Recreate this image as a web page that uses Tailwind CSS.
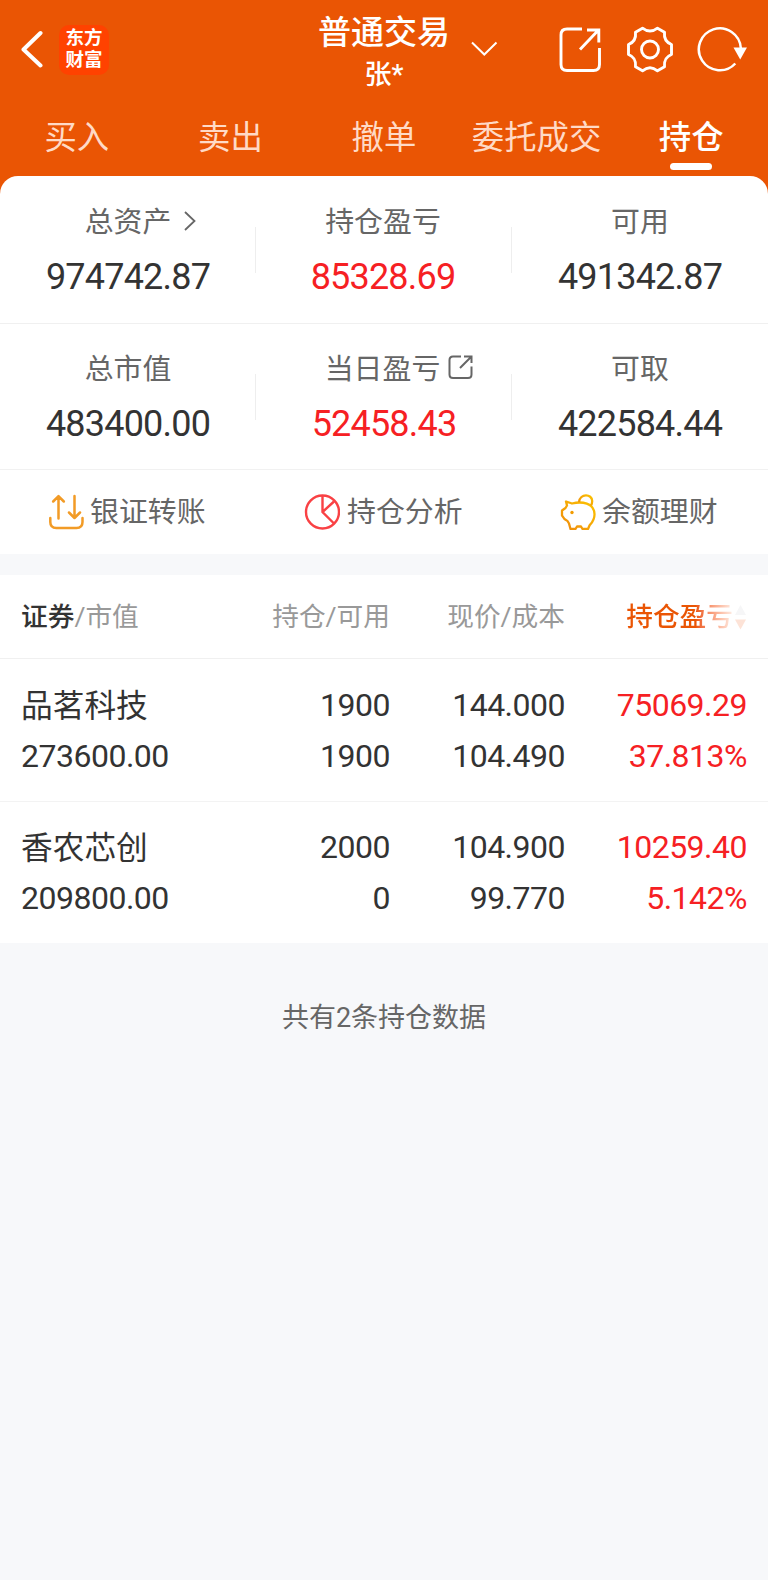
<!DOCTYPE html>
<html lang="zh-CN">
<head>
<meta charset="utf-8">
<title>普通交易</title>
<script src="https://cdn.jsdelivr.net/npm/@tailwindcss/browser@4"></script>
</head>
<body class="w-[768px] h-[1580px] overflow-hidden bg-[#f7f8fa] font-['Roboto','Noto_Sans_CJK_SC',sans-serif] text-[#333]">
<div class="bg-[#ea5504]">
  <header class="h-[100px] grid grid-cols-3">
    <div class="flex items-start">
      <svg class="w-[24px] h-[38px] ml-[20px] mt-[30px]" viewBox="0 0 24 38" fill="none" stroke="#fff" stroke-width="4" stroke-linecap="round" stroke-linejoin="round"><path d="M20.500 3L3.500 19.500L20.500 35.500"/></svg>
      <div class="ml-[15px] mt-[25px] size-[50px] rounded-[10px] bg-[#ff4200] text-white font-bold text-[18.500px] leading-[22px] text-center pt-[2px]">东方<br>财富</div>
    </div>
    <div class="relative flex flex-col items-center text-white">
      <h1 class="mt-[10px] h-[46px] leading-[46px] text-[33px] font-medium whitespace-nowrap">普通交易</h1>
      <div class="h-[36px] mt-[1px] leading-[36px] text-[27px] font-medium">张*</div>
      <svg class="absolute left-[215px] top-[41px] w-[27px] h-[16px]" viewBox="0 0 27 16" fill="none" stroke="#fff" stroke-width="2"><path d="M1 1.500L13.300 13.500L25.500 1.500"/></svg>
    </div>
    <div class="flex items-start text-white">
      <svg class="ml-[47px] mt-[27px] w-[42px] h-[46px]" viewBox="0 0 42 46" fill="none" stroke="currentColor" stroke-width="2.900"><path d="M23 2H8Q2 2 2 8V37.500Q2 43.500 8 43.500H34.500Q40.500 43.500 40.500 37.500V21M28 3H39.800V15.500M39.500 3L21 22.500" /></svg>
      <svg class="ml-[26px] mt-[26px] w-[46px] h-[47px]" viewBox="0 0 46 47" fill="none" stroke="currentColor" stroke-width="2.900" stroke-linejoin="round"><path d="M15.500 2.200Q23 8 30.500 2.200L37.500 6.200Q36.500 15.500 44.500 18.500V28.500Q36.500 31.500 37.500 40.800L30.500 44.800Q23 38.500 15.500 44.800L8.500 40.800Q9.500 31.500 1.500 28.500V18.500Q9.500 15.500 8.500 6.200Z"/><circle cx="23" cy="23.500" r="8.500"/></svg>
      <svg class="ml-[24px] mt-[26px] w-[50px] h-[47px]" viewBox="0 0 50 47" fill="none" stroke="currentColor" stroke-width="2.500"><path d="M43.800 22A21 21 0 1 0 38.300 37.500"/><path d="M36.500 21.500H50L43.200 33.500Z" fill="currentColor" stroke="none"/></svg>
    </div>
  </header>
  <nav class="h-[76px] grid grid-cols-5 text-center text-[32.400px] leading-[46px] text-[#ffdac6] pt-[15px] whitespace-nowrap">
    <div>买入</div><div>卖出</div><div>撤单</div><div class="-ml-[2px]">委托成交</div>
    <div class="text-white font-medium flex flex-col items-center">持仓<span class="mt-[2px] w-[42px] h-[7px] rounded-full bg-white"></span></div>
  </nav>
  <section class="bg-white rounded-t-[18px] text-center">
    <div class="h-[148px] border-b border-[#f0f0f0] grid grid-cols-3 relative">
      <div class="pt-[25px]">
        <div class="h-[42px] leading-[42px] text-[28.900px] text-[#666] relative">总资产
          <svg class="absolute left-[184px] top-[10px] w-[12px] h-[20px]" viewBox="0 0 12 20" fill="none" stroke="#666" stroke-width="1.800"><path d="M1 1L10.500 10L1 19"/></svg></div>
        <div class="h-[42px] mt-[13px] leading-[42px] text-[36px] tracking-[-0.800px]">974742.87</div>
      </div>
      <div class="pt-[25px]">
        <div class="h-[42px] leading-[42px] text-[28.900px] text-[#666] -ml-[2px]">持仓盈亏</div>
        <div class="h-[42px] mt-[13px] leading-[42px] text-[36px] tracking-[-0.800px] text-[#f62023] -ml-[2px]">85328.69</div>
      </div>
      <div class="pt-[25px]">
        <div class="h-[42px] leading-[42px] text-[28.900px] text-[#666]">可用</div>
        <div class="h-[42px] mt-[13px] leading-[42px] text-[36px] tracking-[-0.800px]">491342.87</div>
      </div>
      <i class="absolute left-[255px] top-[51px] w-px h-[46px] bg-[#eee]"></i>
      <i class="absolute left-[511px] top-[51px] w-px h-[46px] bg-[#eee]"></i>
    </div>
    <div class="h-[146px] border-b border-[#f1f1f1] grid grid-cols-3 relative">
      <div class="pt-[24px]">
        <div class="h-[42px] leading-[42px] text-[28.900px] text-[#666]">总市值</div>
        <div class="h-[42px] mt-[13px] leading-[42px] text-[36px] tracking-[-0.800px]">483400.00</div>
      </div>
      <div class="pt-[24px]">
        <div class="h-[42px] leading-[42px] text-[28.900px] text-[#666] relative -ml-[3px]">当日盈亏
          <svg class="absolute left-[195px] top-[7px] w-[25px] h-[25px]" viewBox="0 0 25 25" fill="none" stroke="#666" stroke-width="2"><path d="M13 1.500H5Q1.500 1.500 1.500 5V19.500Q1.500 23 5 23H20Q23.500 23 23.500 19.500V11.500M16 1.500H23.500V8M23.200 1.800L12 13"/></svg></div>
        <div class="h-[42px] mt-[13px] leading-[42px] text-[36px] tracking-[-0.800px] text-[#f62023]">52458.43</div>
      </div>
      <div class="pt-[24px]">
        <div class="h-[42px] leading-[42px] text-[28.900px] text-[#666]">可取</div>
        <div class="h-[42px] mt-[13px] leading-[42px] text-[36px] tracking-[-0.800px]">422584.44</div>
      </div>
      <i class="absolute left-[255px] top-[50px] w-px h-[46px] bg-[#eee]"></i>
      <i class="absolute left-[511px] top-[50px] w-px h-[46px] bg-[#eee]"></i>
    </div>
    <div class="h-[84px] grid grid-cols-3 text-[28.900px] text-[#666] pb-px">
      <div class="flex items-center pl-[48px] gap-[6px]">
        <svg class="w-[36px] h-[36px]" viewBox="0 0 36 36" fill="none" stroke="#f29b26" stroke-width="2.500" stroke-linecap="round" stroke-linejoin="round"><path d="M2.300 24V28Q2.300 34 8.300 34H28.500Q34.500 34 34.500 28V24M10.500 24.500V2.500M5.200 7.500L10.500 2.200L15.800 7.500M26.500 2V23.500M21 18.500L26.500 24L32 18.500"/></svg>
        <span class="pt-[3px]">银证转账</span>
      </div>
      <div class="flex items-center pl-[48px] gap-[7px]">
        <svg class="w-[36px] h-[36px]" viewBox="0 0 36 36" fill="none" stroke="#f94144" stroke-width="2.400"><circle cx="18.500" cy="18" r="16.500"/><path d="M18.500 1.500V18L30 29.500M18.500 18L30 7.500"/></svg>
        <span class="pt-[3px]">持仓分析</span>
      </div>
      <div class="flex items-center pl-[48px] gap-[6px]">
        <svg class="w-[36px] h-[36px]" viewBox="0 0 36 36" fill="none" stroke="url(#pig)" stroke-width="2.300" stroke-linejoin="round"><defs><linearGradient id="pig" x1="0" y1="1" x2="1" y2="0"><stop offset="0" stop-color="#ef8a0c"/><stop offset="1" stop-color="#fcc400"/></linearGradient></defs><path d="M6 7.500L12 9.500C22 7 34 9 34.500 20C34.700 26 31.500 29 29.500 31.500L28 35H22.500L21 32.500H17L15.500 35H10.500L9 29.500L7.500 27Q4 25.500 2 21.500V16.500L5.500 14L7 11.500Z"/><path d="M19 8C20 -.8 32 -.5 32.200 7Q32.200 9.500 31 11.500"/><circle cx="12" cy="18.500" r="1.700" fill="#f29b00" stroke="none"/></svg>
        <span class="pt-[3px]">余额理财</span>
      </div>
    </div>
  </section>
</div>

<section class="mt-[21px] bg-white">
  <div class="h-[84px] pt-[1px] border-b border-[#f0f0f0] pl-[21px] pr-[21px] grid grid-cols-[169px_200px_175px_182px] items-center text-right text-[26.700px] text-[#999] whitespace-nowrap">
    <div class="text-left"><span class="text-[#333] font-medium">证券</span>/市值</div>
    <div>持仓/可用</div>
    <div>现价/成本</div>
    <div class="flex items-center justify-end">
      <span class="bg-linear-to-r from-[#ea5504] from-65% to-[#fdeee6] bg-clip-text text-transparent font-medium">持仓盈亏</span>
      <svg class="ml-[1px] w-[13px] h-[26px]" viewBox="0 0 13 26"><path d="M6.500 1L12 11H1Z" fill="#f6f6f7"/><path d="M1 15.500H12L6.500 25.500Z" fill="#fde3d7"/></svg>
    </div>
  </div>
  <div class="h-[143px] border-b border-[#f3f3f3] pt-[21px] pl-[21px] pr-[21px] grid grid-cols-[169px_200px_175px_182px] grid-rows-[51px_51px] leading-[51px] text-right text-[32px] tracking-[-0.500px]">
    <div class="text-left tracking-normal text-[31.700px] pt-px">品茗科技</div><div>1900</div><div>144.000</div><div class="text-[#f62023]">75069.29</div>
    <div class="text-left">273600.00</div><div>1900</div><div>104.490</div><div class="text-[#f62023]">37.813%</div>
  </div>
  <div class="h-[141px] pt-[20px] pl-[21px] pr-[21px] grid grid-cols-[169px_200px_175px_182px] grid-rows-[51px_51px] leading-[51px] text-right text-[32px] tracking-[-0.500px]">
    <div class="text-left tracking-normal text-[31.700px] pt-px">香农芯创</div><div>2000</div><div>104.900</div><div class="text-[#f62023]">10259.40</div>
    <div class="text-left">209800.00</div><div>0</div><div>99.770</div><div class="text-[#f62023]">5.142%</div>
  </div>
</section>
<footer class="mt-[55px] text-center text-[27px] leading-[40px] text-[#666]">共有2条持仓数据</footer>
</body>
</html>
